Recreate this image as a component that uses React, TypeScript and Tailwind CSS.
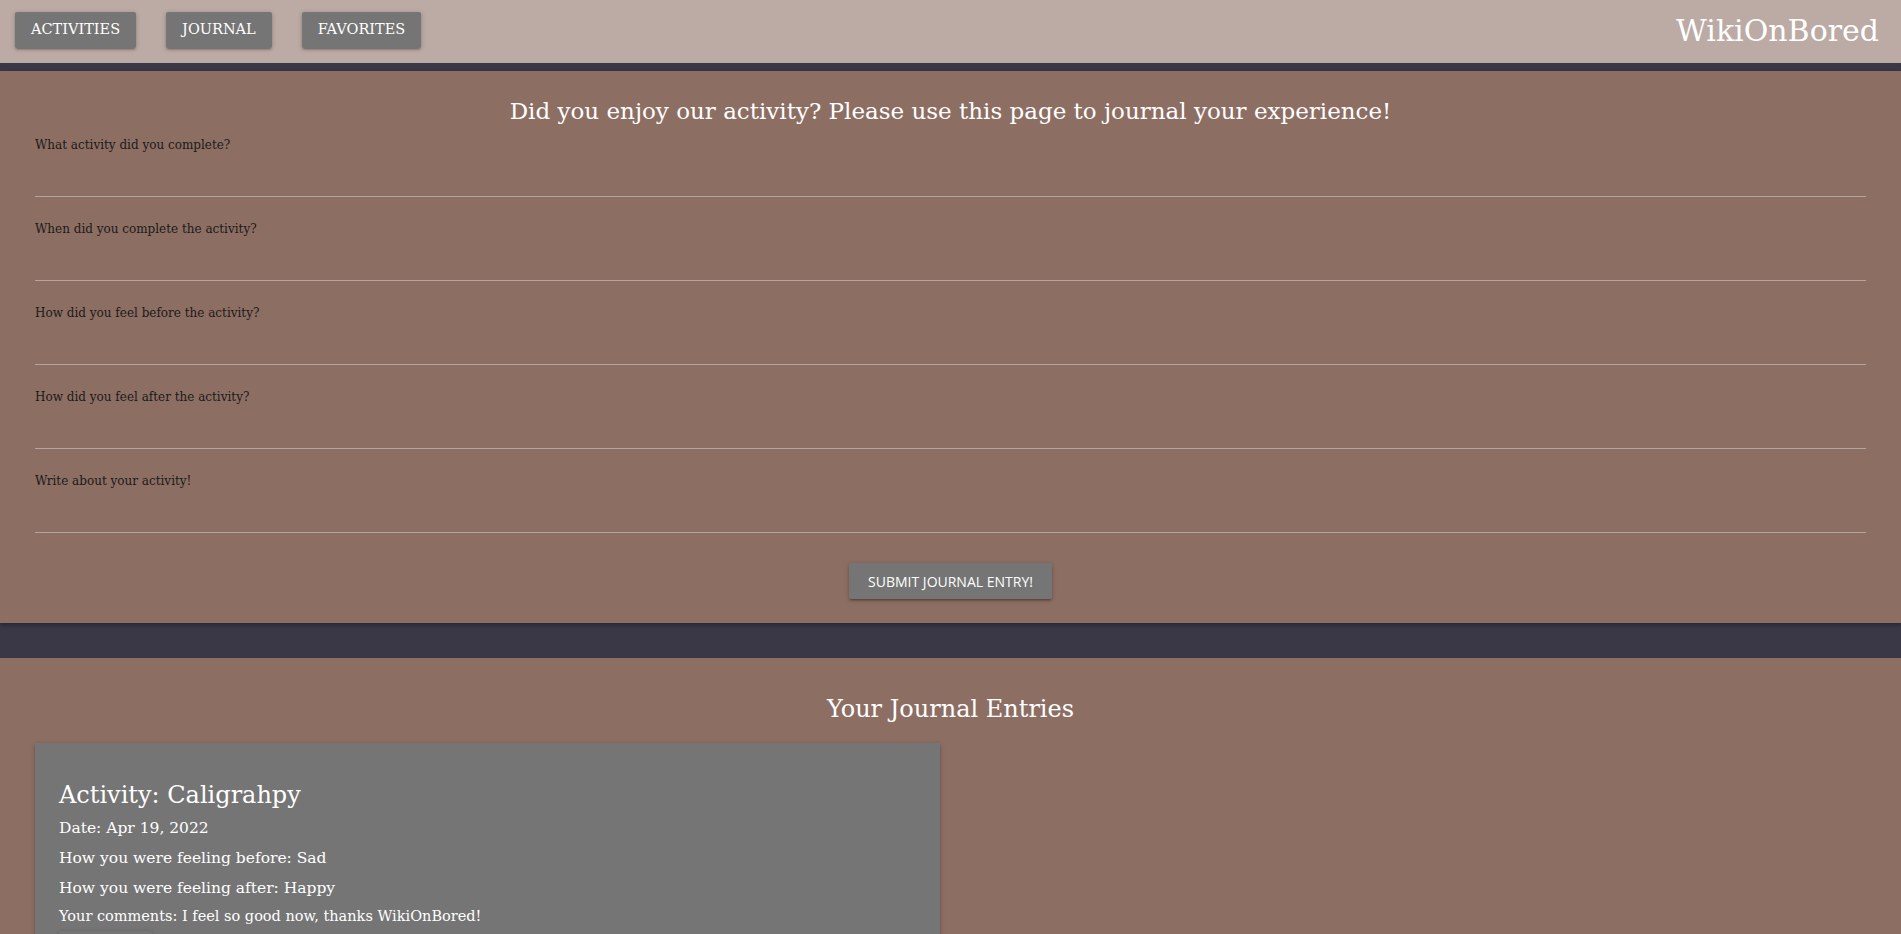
const slab = { fontFamily: '"DejaVu Serif", "Liberation Serif", serif' };

const questions = [
  "What activity did you complete?",
  "When did you complete the activity?",
  "How did you feel before the activity?",
  "How did you feel after the activity?",
  "Write about your activity!",
];

function NavButton({ label }: { label: string }) {
  return (
    <button className="h-9 px-4 rounded-[2px] bg-[#757575] text-white text-[14.5px] uppercase shadow-[0_2px_2px_rgba(0,0,0,0.14),0_3px_1px_-2px_rgba(0,0,0,0.12),0_1px_5px_rgba(0,0,0,0.2)]">
      {label}
    </button>
  );
}

function Field({ label, first }: { label: string; first?: boolean }) {
  return (
    <div className={first ? "pt-[11px]" : "pt-[24px]"}>
      <label className="block text-[12px] leading-[16px] text-[#1a1a1a]">{label}</label>
      <div className="h-[44px] border-b border-[#b3a5a0]" />
    </div>
  );
}

export default function App() {
  return (
    <div className="min-h-screen bg-[#3a3747]" style={slab}>
      <nav className="h-[63px] bg-[#bcaaa4] flex items-start justify-between pt-3 pl-[15px] pr-[22px]">
        <div className="flex gap-[30px]">
          <NavButton label="Activities" />
          <NavButton label="Journal" />
          <NavButton label="Favorites" />
        </div>
        <div className="text-white text-[30px] leading-[36px] pt-[1px]">WikiOnBored</div>
      </nav>

      <section className="mt-[8px] bg-[#8d6e63] pt-[25px] pb-[24px] px-[35px] shadow-[0_2px_4px_rgba(0,0,0,0.3)]">
        <h2 className="text-center text-white text-[23px] leading-[30px]">
          Did you enjoy our activity? Please use this page to journal your experience!
        </h2>
        {questions.map((q, i) => (
          <Field key={q} label={q} first={i === 0} />
        ))}
        <div className="flex justify-center pt-[30px]">
          <button
            className="h-9 px-[19px] rounded-[2px] bg-[#757575] text-white text-[14px] uppercase shadow-[0_2px_2px_rgba(0,0,0,0.14),0_3px_1px_-2px_rgba(0,0,0,0.12),0_1px_5px_rgba(0,0,0,0.2)]"
            style={{ fontFamily: '"Open Sans", "Noto Sans", sans-serif' }}
          >
            Submit Journal Entry!
          </button>
        </div>
      </section>

      <section className="mt-[35px] bg-[#8d6e63] pt-[35px] px-[35px] pb-10">
        <h2 className="text-center text-white text-[24px] leading-[32px]">Your Journal Entries</h2>
        <div className="mt-[18px] w-[905px] bg-[#757575] px-6 pt-[36px] pb-6 text-white shadow-[0_2px_2px_rgba(0,0,0,0.14),0_3px_1px_-2px_rgba(0,0,0,0.12),0_1px_5px_rgba(0,0,0,0.2)]">
          <h3 className="text-[24px] leading-[32px]">Activity: Caligrahpy</h3>
          <p className="text-[15.5px] leading-[30px] mt-[2px]">Date: Apr 19, 2022</p>
          <p className="text-[15.5px] leading-[30px]">How you were feeling before: Sad</p>
          <p className="text-[15.5px] leading-[30px]">How you were feeling after: Happy</p>
          <p className="text-[14.5px] leading-[26px]">Your comments: I feel so good now, thanks WikiOnBored!</p>
          <button className="mt-[2px] h-9 px-4 rounded-[2px] bg-[#757575] text-white text-[14px] uppercase shadow-[0_2px_2px_rgba(0,0,0,0.14),0_3px_1px_-2px_rgba(0,0,0,0.12),0_1px_5px_rgba(0,0,0,0.2)]">
            Delete
          </button>
        </div>
      </section>
    </div>
  );
}
